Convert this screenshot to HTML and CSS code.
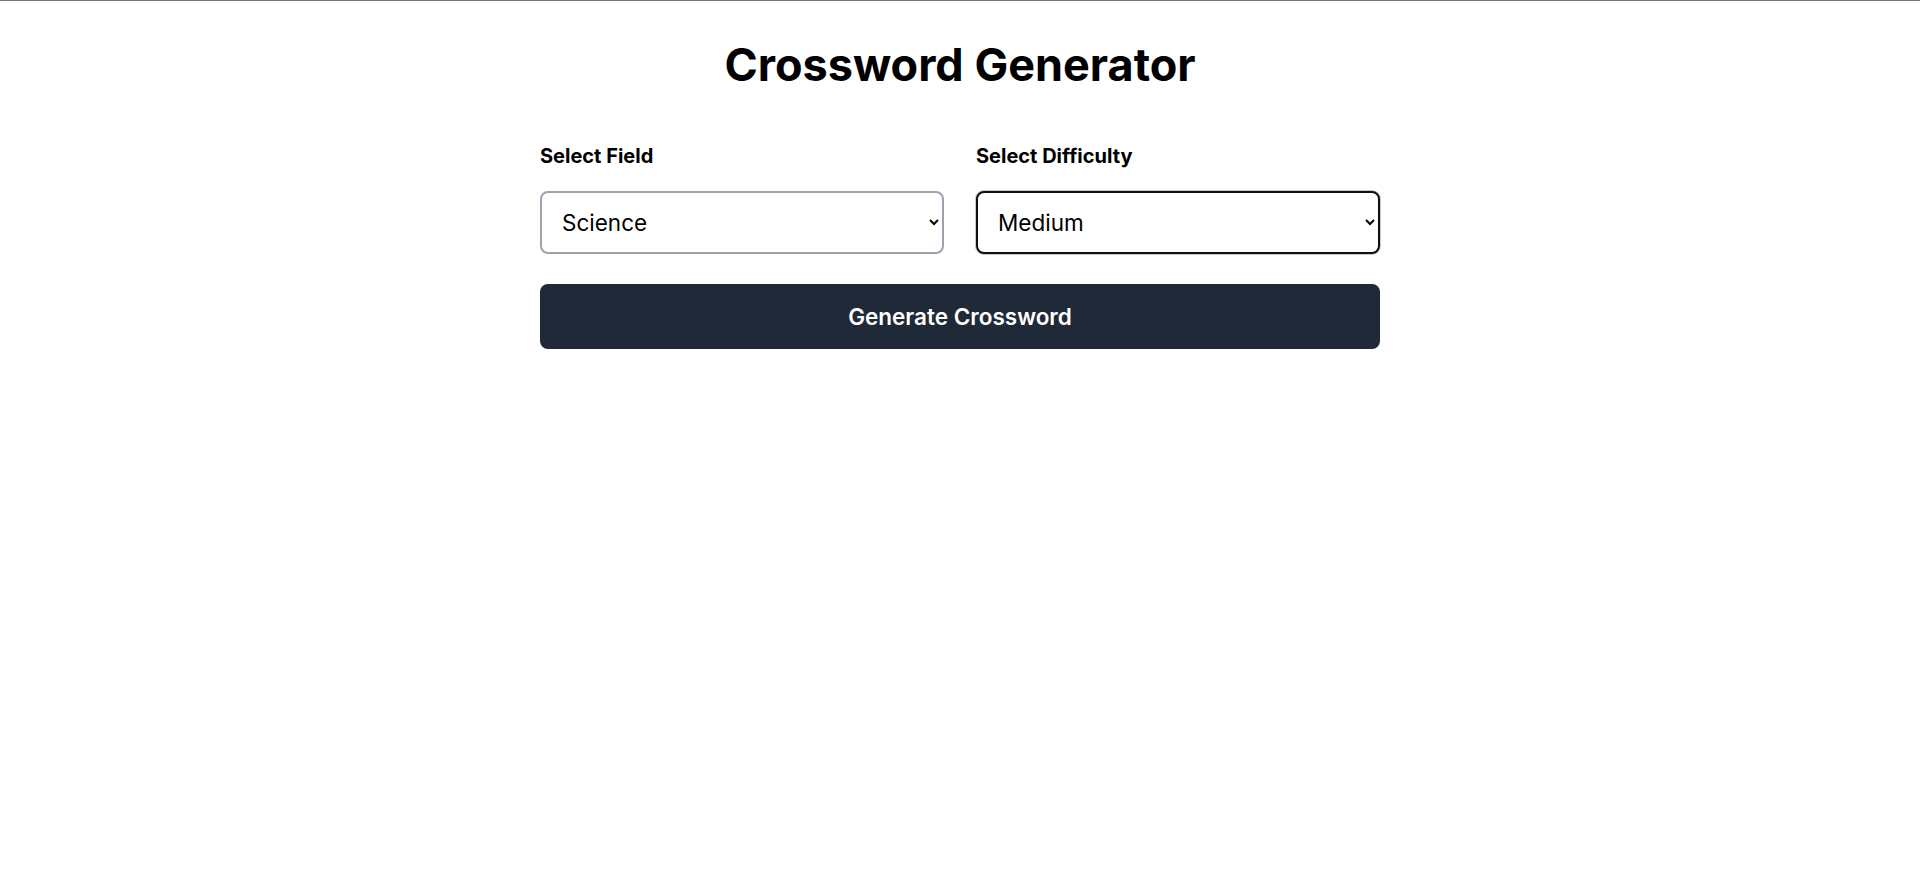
FILE: index.html
```html
<!DOCTYPE html>
<html lang="en">
<head>
<meta charset="utf-8">
<title>Crossword Generator</title>
<link rel="stylesheet" href="styles.css">
</head>
<body>
<main class="page">
  <h1 class="title">Crossword Generator</h1>
  <div class="controls">
    <div class="field">
      <label class="label" for="field">Select Field</label>
      <select id="field" class="select">
        <option>Science</option>
        <option>History</option>
        <option>Geography</option>
      </select>
    </div>
    <div class="field">
      <label class="label" for="difficulty">Select Difficulty</label>
      <select id="difficulty" class="select select-focused">
        <option>Easy</option>
        <option selected>Medium</option>
        <option>Hard</option>
      </select>
    </div>
  </div>
  <button class="generate" type="button">Generate Crossword</button>
</main>
</body>
</html>
```

FILE: styles.css
```css
html, body {
  margin: 0;
  padding: 0;
  background: #ffffff;
}

body {
  border-top: 1px solid #6b7a85;
  font-family: Inter, "Liberation Sans", sans-serif;
  color: #000000;
}

.page {
  width: 840px;
  margin: 0 auto;
  padding-top: 37px;
  display: flex;
  flex-direction: column;
}

.title {
  margin: 0;
  font-size: 45px;
  line-height: 54px;
  font-weight: 700;
  text-align: center;
}

.controls {
  margin-top: 49px;
  display: grid;
  grid-template-columns: 1fr 1fr;
  gap: 32px;
}

.field {
  display: flex;
  flex-direction: column;
  gap: 20px;
}

.label {
  font-size: 20px;
  line-height: 30px;
  font-weight: 700;
}

.select {
  box-sizing: border-box;
  height: 63px;
  width: 100%;
  padding: 0 12px 0 16px;
  border: 2px solid #9ca3af;
  border-radius: 8px;
  background: #ffffff;
  font-family: Inter, "Liberation Sans", sans-serif;
  font-size: 22.5px;
  color: #000000;
}

.select-focused {
  border-color: #101010;
  box-shadow: 0 0 0 1px #c8c8c8;
}

.generate {
  margin-top: 30px;
  height: 65px;
  border: none;
  border-radius: 8px;
  background: #1f2937;
  color: #ffffff;
  font-family: Inter, "Liberation Sans", sans-serif;
  font-size: 22.5px;
  font-weight: 600;
  cursor: pointer;
}
```
